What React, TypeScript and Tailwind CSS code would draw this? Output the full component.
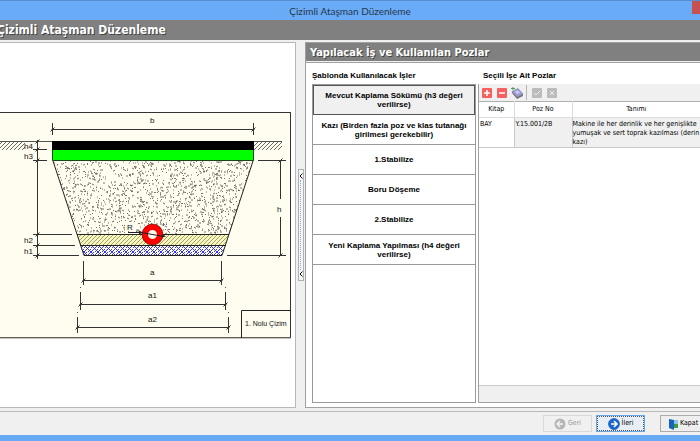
import type { ReactNode } from 'react';
import clsx from 'clsx';

const jobs = [
  'Mevcut Kaplama Sökümü (h3 değeri verilirse)',
  'Kazı (Birden fazla poz ve klas tutanağı girilmesi gerekebilir)',
  '1.Stabilize',
  'Boru Döşeme',
  '2.Stabilize',
  'Yeni Kaplama Yapılması (h4 değeri verilirse)',
];

// Short random strokes for the gravel fill, seeded so every render is the same
function gravelPath(count: number) {
  let seed = 7;
  const next = () => {
    seed = (seed * 16807) % 2147483647;
    return seed / 2147483647;
  };
  let d = '';
  for (let i = 0; i < count; i++) {
    const x = Math.round(52 + next() * 202);
    const y = Math.round(161 + next() * 73);
    const dx = Math.round(next() * 4 - 2);
    const dy = Math.round(next() * 2 - 1);
    d += `M${x} ${y}l${dx || 1} ${dy}`;
  }
  return d;
}

const gravel = gravelPath(1700);

function HorizontalDim({ x1, x2, y, top, bottom }: { x1: number; x2: number; y: number; top: number; bottom: number }) {
  return (
    <path
      d={`M${x1 - 1} ${y}H${x2 + 1}M${x1} ${top}V${bottom}M${x2} ${top}V${bottom}M${x1 - 2} ${y + 2}l4 -4M${x2 - 2} ${y + 2}l4 -4`}
      stroke="#333"
      fill="none"
    />
  );
}

function TrenchDrawing() {
  return (
    <svg viewBox="0 112 291 227" className="block w-full" role="img" aria-label="1. Nolu Çizim">
      <defs>
        <pattern id="ground" width="4" height="4" patternUnits="userSpaceOnUse">
          <path d="M-1 5L5 -1M-1 1L1 -1M3 5L5 3" stroke="#555" strokeWidth="0.9" />
        </pattern>
        <pattern id="sand" width="4" height="4" patternUnits="userSpaceOnUse">
          <rect width="4" height="4" fill="#f6f4cf" />
          <path d="M-1 5L5 -1M-1 1L1 -1M3 5L5 3" stroke="#a8a840" />
        </pattern>
        <pattern id="bedding" width="7" height="7" patternUnits="userSpaceOnUse">
          <path d="M-1 8L8 -1M-1 4L4 -1M3 8L8 3M-1 -1L8 8" stroke="#3434f5" />
        </pattern>
        <clipPath id="fill">
          <path d="M53 161H253L229 234H77Z" />
        </clipPath>
      </defs>
      <rect x="-5" y="112.5" width="295.5" height="225" fill="#fffcf0" stroke="#333" />
      <path d="M0 338H291" stroke="#8c8878" />

      <rect x="0" y="141" width="25" height="9" fill="url(#ground)" />
      <rect x="254" y="141" width="28" height="9" fill="url(#ground)" />
      <path d="M0 141.5H282" stroke="#555" />

      <path d={gravel} stroke="#6b625c" strokeWidth="0.9" clipPath="url(#fill)" />
      <path d="M77 235H229L225 245H80Z" fill="url(#sand)" />
      <path d="M80 245H225L222 255H84Z" fill="url(#bedding)" />
      <path d="M53 161L84 255.5H222L253 161M77 234.5H229M80 245.5H226" stroke="#222" fill="none" />
      <rect x="52" y="141" width="202" height="10" fill="#000" />
      <rect x="52" y="150" width="202" height="11" fill="#0f0" />
      <path d="M52.5 150V160.5H253.5V150" stroke="#164516" fill="none" />

      <circle cx="152.5" cy="234.5" r="7.5" fill="#fffcf0" stroke="#f00" strokeWidth="6" />
      <circle cx="152.5" cy="234.5" r="10.5" fill="none" stroke="#400" strokeWidth="0.6" />
      <path d="M128 232.5H141L164 236.5" stroke="#222" fill="none" />
      <path d="M139 230.5l4 2l-4 2zM162 234.5l4 2l-4 1z" fill="#222" />

      <HorizontalDim x1={52.5} x2={253.5} y={129.5} top={123} bottom={135} />
      <HorizontalDim x1={83.5} x2={221.5} y={280.5} top={261} bottom={285} />
      <HorizontalDim x1={80.5} x2={225.5} y={304.5} top={292} bottom={310} />
      <HorizontalDim x1={77.5} x2={228.5} y={327.5} top={317} bottom={333} />
      <path d="M80.5 287v1M225.5 287v1M77.5 312v1M228.5 312v1" stroke="#555" />

      <path d="M37.5 140V259M33 149.5H47M33 160.5H47M33 234.5H72M33 245.5H75M33 255.5H79" stroke="#333" fill="none" />
      <path d="M35.5 143.5l4 -4M35.5 151.5l4 -4M35.5 162.5l4 -4M35.5 236.5l4 -4M35.5 247.5l4 -4M35.5 257.5l4 -4" stroke="#333" />
      <path d="M258 160.5H286M227 255.5H286M280.5 160V199M280.5 217V256M278.5 162.5l4 -4M278.5 257.5l4 -4" stroke="#333" fill="none" />

      <path d="M241.5 338V310.5H291" stroke="#222" fill="none" />
      <rect x="126" y="222" width="8" height="9" fill="#fffcf0" />
      <g className="font-['Liberation_Sans',sans-serif]" fontSize="8" fill="#111">
        <text x="150" y="123">b</text>
        <text x="24" y="149">h4</text>
        <text x="24" y="159">h3</text>
        <text x="24" y="243">h2</text>
        <text x="24" y="254">h1</text>
        <text x="277" y="212">h</text>
        <text x="127" y="230">R</text>
        <text x="150" y="275">a</text>
        <text x="148" y="298">a1</text>
        <text x="148" y="322">a2</text>
        <text x="245" y="326" fontSize="7">1. Nolu Çizim</text>
      </g>
    </svg>
  );
}

function ToolButton({ label, disabled, children }: { label: string; disabled?: boolean; children: ReactNode }) {
  return (
    <button type="button" aria-label={label} disabled={disabled} className="flex size-[15px] items-center justify-center">
      <svg viewBox="0 0 12 12" className="size-3">
        {children}
      </svg>
    </button>
  );
}

function Toolbar() {
  return (
    <div className="flex h-[17px] items-center bg-[#f0f0f0]">
      <ToolButton label="Ekle">
        <rect x="1" y="1" width="10" height="10" rx="1" fill="#f66060" />
        <path d="M6 3V9M3 6H9" stroke="#fff" strokeWidth="1.5" />
      </ToolButton>
      <ToolButton label="Sil">
        <rect x="1" y="1" width="10" height="10" rx="1" fill="#f66060" />
        <path d="M3 6H9" stroke="#fff" strokeWidth="1.5" />
      </ToolButton>
      <ToolButton label="Kitaptan seç">
        <path d="M1 4.5L7 1.5L12 7L6 10Z" fill="#9c9ed4" stroke="#74729f" strokeWidth="0.6" />
        <path d="M1 4.5V6L6 12V10ZM6 10V12L12 9V7Z" fill="#77737f" />
        <path d="M4 4.5L7 3.5L9 6L6 7Z" fill="#c9cbf1" />
        <path d="M0 1.5H4M2 0V3" stroke="#45a345" />
      </ToolButton>
      <div className="mx-[2px] h-[15px] w-px bg-[#b5b5b5]" />
      <ToolButton label="Onayla" disabled>
        <rect x="1" y="1" width="10" height="10" rx="1" fill="#bcbcbc" />
        <path d="M3 6L5 8L9 4" stroke="#eee" fill="none" />
      </ToolButton>
      <ToolButton label="Vazgeç" disabled>
        <rect x="1" y="1" width="10" height="10" rx="1" fill="#bcbcbc" />
        <path d="M4 4L8 8M8 4L4 8" stroke="#eee" fill="none" />
      </ToolButton>
    </div>
  );
}

function PozTable() {
  return (
    <div className="flex min-w-0 flex-1 flex-col border-b border-l border-[#a0a0a0]">
      <Toolbar />
      <table className="w-full table-fixed border-collapse border-t border-[#b0b0b0] text-[7px] leading-[9px] text-black">
        <thead>
          <tr className="h-4">
            <th className="w-[35px] border-r border-b border-[#dcdcdc] font-normal">Kitap</th>
            <th className="w-[58px] border-r border-b border-[#dcdcdc] font-normal">Poz No</th>
            <th className="border-b border-[#dcdcdc] font-normal">Tanımı</th>
          </tr>
        </thead>
        <tbody>
          <tr className="h-[30px] align-top">
            <td className="border-r border-b border-[#c8c8c8] pt-[2px] pl-px">BAY</td>
            <td className="border-r border-b border-[#c8c8c8] bg-[#f0f0f0] pt-[2px] pl-px">Y.15.001/2B</td>
            <td className="border-b border-[#c8c8c8] bg-[#f0f0f0] pt-[2px] whitespace-nowrap">
              Makine ile her derinlik ve her genişlikte
              <br />
              yumuşak ve sert toprak kazılması (derin
              <br />
              kazı)
            </td>
          </tr>
        </tbody>
      </table>
      <div className="mt-auto h-[17px] border-t border-[#c8c8d0] bg-[#f0f0f0]" />
    </div>
  );
}

function Splitter() {
  return (
    <div className="flex w-[9px] flex-none items-center justify-center">
      <button
        type="button"
        aria-label="Paneli daralt"
        className="flex h-[112px] w-[6px] flex-col items-center justify-between border border-[#b0b0b0] bg-[#f5f5f5] py-[3px]"
      >
        <svg viewBox="0 0 4 6" className="h-[6px] w-1">
          <path d="M3.5 0.5L1 3L3.5 5.5" stroke="#111" fill="none" />
        </svg>
        <span className="my-px w-0 flex-1 border-l border-dotted border-[#7fb0e0]" />
        <svg viewBox="0 0 4 6" className="h-[6px] w-1">
          <path d="M3.5 0.5L1 3L3.5 5.5" stroke="#111" fill="none" />
        </svg>
      </button>
    </div>
  );
}

const footerButton = 'flex h-[17px] w-[49px] flex-none items-center border text-[7px] leading-none';
const label = "font-['Liberation_Sans',sans-serif] text-[8px] font-bold";

export default function App() {
  return (
    <div className="flex min-h-screen flex-col overflow-hidden border-b-[6px] border-[#66aaf5] bg-[#f0f0f0] font-['DejaVu_Sans_Condensed','DejaVu_Sans',sans-serif] text-black">
      <header className="flex h-5 items-center border-t border-[#578fd0] bg-[#69abf6]">
        <div className="flex-1 text-center font-['Lato',sans-serif] text-[10px] leading-none text-[#26384c]">
          Çizimli Ataşman Düzenleme
        </div>
        <button type="button" aria-label="Pencereyi kapat" className="-ml-2 h-[13px] w-2 self-start bg-[#c75050]" />
      </header>
      <div className="flex h-5 items-center overflow-hidden bg-[#808080]">
        <h1 className="-ml-[3px] text-[12px] leading-5 font-bold whitespace-nowrap text-white [text-shadow:1px_1px_0_#444]">
          Çizimli Ataşman Düzenleme
        </h1>
      </div>

      <main className="flex flex-1 pt-[2px] pb-[3px]">
        <section className="flex min-w-0 flex-[291] flex-col border-t border-r border-b border-[#b8b8b8] bg-white pt-[69px] pr-1">
          <TrenchDrawing />
        </section>

        <Splitter />

        <section className="flex min-w-0 flex-[394] flex-col border-l border-[#a0a0a0]">
          <h2 className="flex h-[19px] items-center border-t border-[#a0a0a0] bg-[#808080] pl-1 text-[11px] leading-none font-bold whitespace-nowrap text-white [text-shadow:1px_1px_0_#444]">
            Yapılacak İş ve Kullanılan Pozlar
          </h2>
          <div className="mt-px flex flex-1 gap-[2px] border-t border-b border-[#a0a0a0] bg-white pb-1 pl-[6px]">
            <div className="flex w-[164px] flex-none flex-col">
              <h3 className={clsx('flex h-[21px] items-center pt-1', label)}>Şablonda Kullanılacak İşler</h3>
              <div className="flex flex-1 flex-col border border-[#999]">
                {jobs.map((job, i) => (
                  <button
                    key={job}
                    type="button"
                    className={clsx(
                      'flex h-[30px] items-center justify-center px-2 text-center leading-[9px]',
                      label,
                      i === 0 ? 'border border-[#555] bg-[#f0f0f0]' : 'border-b border-[#999]',
                    )}
                  >
                    {job}
                  </button>
                ))}
              </div>
            </div>
            <div className="flex min-w-0 flex-1 flex-col">
              <h3 className={clsx('flex h-[21px] items-center pt-1 pl-[5px]', label)}>Seçili İşe Ait Pozlar</h3>
              <PozTable />
            </div>
          </div>
        </section>
      </main>

      <footer className="-mr-[9px] flex h-6 items-center justify-end border-t border-[#b8b8b8]">
        <button type="button" disabled className={clsx(footerButton, 'justify-center gap-[2px] border-[#d9d9d9] text-[#999]')}>
          <svg viewBox="0 0 12 12" className="size-3">
            <circle cx="6" cy="6" r="5.5" fill="#b5b5b5" />
            <path d="M9 6H3M6 3L3 6L6 9" stroke="#f2f2f2" strokeWidth="1.6" fill="none" />
          </svg>
          Geri
        </button>
        <button
          type="button"
          className={clsx(
            footerButton,
            'ml-1 justify-center gap-[2px] border-[#66a7e8] bg-[#e8eef5] outline-1 -outline-offset-2 outline-dotted outline-[#555]',
          )}
        >
          <svg viewBox="0 0 12 12" className="size-3">
            <circle cx="6" cy="6" r="5.5" fill="#1767d2" stroke="#134a98" strokeWidth="0.6" />
            <path d="M3 6H9M6 3L9 6L6 9" stroke="#fff" strokeWidth="1.6" fill="none" />
          </svg>
          İleri
        </button>
        <button type="button" className={clsx(footerButton, 'ml-[15px] gap-px border-[#acacac] bg-[#eee] pl-[6px]')}>
          <svg viewBox="0 0 12 12" className="size-3">
            <path d="M7 2H11V6H7Z" fill="#8fc2eb" />
            <path d="M7 6H11V10H7Z" fill="#3a9b46" />
            <path d="M2 1L7 2V12L2 10Z" fill="#1762bc" />
          </svg>
          Kapat
        </button>
      </footer>
    </div>
  );
}
